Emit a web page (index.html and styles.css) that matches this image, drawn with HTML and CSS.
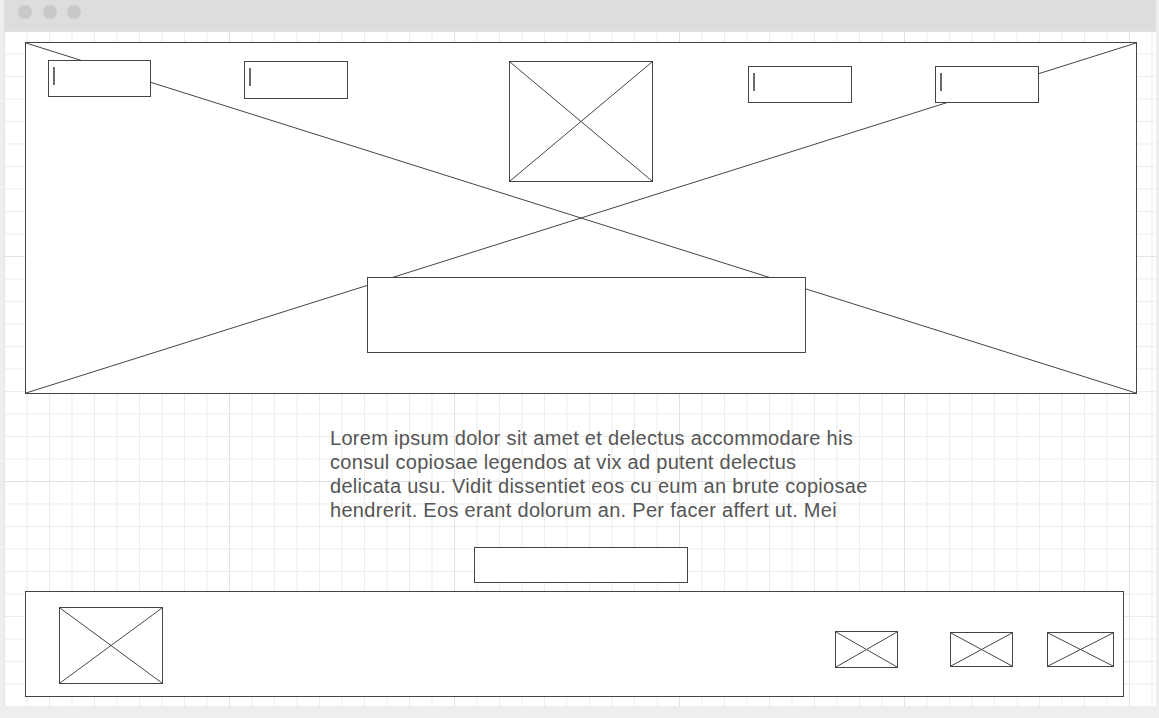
FILE: index.html
```html
<!DOCTYPE html>
<html lang="en">
<head>
<meta charset="utf-8">
<title>Wireframe</title>
<link rel="stylesheet" href="styles.css">
</head>
<body>
<div class="window">
  <div class="titlebar">
    <span class="dot"></span><span class="dot"></span><span class="dot"></span>
  </div>
  <div class="canvas">
    <section class="hero">
      <svg class="cross" viewBox="0 0 100 100" preserveAspectRatio="none"><line x1="0" y1="0" x2="100" y2="100"/><line x1="100" y1="0" x2="0" y2="100"/></svg>
      <div class="hero-row">
        <div class="input in-1"><span class="caret"></span></div>
        <div class="input in-2"><span class="caret"></span></div>
        <div class="ph hero-img"><svg viewBox="0 0 100 100" preserveAspectRatio="none"><line x1="0" y1="0" x2="100" y2="100"/><line x1="100" y1="0" x2="0" y2="100"/></svg></div>
        <div class="input in-3"><span class="caret"></span></div>
        <div class="input in-4"><span class="caret"></span></div>
      </div>
      <div class="hero-box"></div>
    </section>
    <p class="copy">Lorem ipsum dolor sit amet et delectus accommodare his<br>consul copiosae legendos at vix ad putent delectus<br>delicata usu. Vidit dissentiet eos cu eum an brute copiosae<br>hendrerit. Eos erant dolorum an. Per facer affert ut. Mei</p>
    <div class="button"></div>
    <footer class="footer">
      <div class="ph foot-img"><svg viewBox="0 0 100 100" preserveAspectRatio="none"><line x1="0" y1="0" x2="100" y2="100"/><line x1="100" y1="0" x2="0" y2="100"/></svg></div>
      <div class="ph small s-1"><svg viewBox="0 0 100 100" preserveAspectRatio="none"><line x1="0" y1="0" x2="100" y2="100"/><line x1="100" y1="0" x2="0" y2="100"/></svg></div>
      <div class="ph small s-2"><svg viewBox="0 0 100 100" preserveAspectRatio="none"><line x1="0" y1="0" x2="100" y2="100"/><line x1="100" y1="0" x2="0" y2="100"/></svg></div>
      <div class="ph small s-3"><svg viewBox="0 0 100 100" preserveAspectRatio="none"><line x1="0" y1="0" x2="100" y2="100"/><line x1="100" y1="0" x2="0" y2="100"/></svg></div>
    </footer>
  </div>
</div>
</body>
</html>
```
FILE: styles.css
```css
* { box-sizing: border-box; }
html, body { margin: 0; padding: 0; }
body {
  background: #eeeeee;
  font-family: "Liberation Sans", Arial, sans-serif;
  width: 1159px;
  height: 718px;
  overflow: hidden;
}
.window {
  margin-left: 4px;
  width: 1152px;
  display: flex;
  flex-direction: column;
}
.titlebar {
  height: 31px;
  background: #dddddd;
  display: flex;
  align-items: flex-start;
  padding: 5px 0 0 14px;
  gap: 10.5px;
}
.dot {
  width: 14px;
  height: 14px;
  border-radius: 50%;
  background: #c9c9c9;
}
.canvas {
  height: 675px;
  background-color: #ffffff;
  background-image:
    linear-gradient(to right, #e2e2e2 1px, transparent 1px),
    linear-gradient(to bottom, #e2e2e2 1px, transparent 1px),
    linear-gradient(to right, #ececec 1px, transparent 1px),
    linear-gradient(to bottom, #ececec 1px, transparent 1px);
  background-size: 225px 225px, 225px 225px, 22.5px 22.5px, 22.5px 22.5px;
  background-position: 0 0;
  padding: 11px 0 0 21px;
  display: flex;
  flex-direction: column;
  align-items: flex-start;
}
svg line {
  stroke: #444444;
  stroke-width: 1;
  vector-effect: non-scaling-stroke;
}
.hero {
  position: relative;
  width: 1112px;
  height: 352px;
  border: 1px solid #444444;
  background: #ffffff;
  padding-top: 17px;
}
.cross {
  position: absolute;
  left: 0;
  top: 0;
  width: 100%;
  height: 100%;
  display: block;
}
.hero-row {
  position: relative;
  display: flex;
  align-items: flex-start;
  padding-left: 22px;
}
.input {
  width: 104px;
  height: 37px;
  border: 1px solid #444444;
  background: #ffffff;
  padding: 6px 0 0 4px;
  flex: none;
}
.caret {
  display: block;
  width: 2px;
  height: 18px;
  background: #6a6a6a;
}
.in-1 { width: 103px; }
.in-2 { margin-left: 93px; margin-top: 1px; height: 38px; }
.hero-img { margin-left: 161px; margin-top: 1px; width: 144px; height: 121px; }
.in-3 { margin-left: 95px; margin-top: 6px; }
.in-4 { margin-left: 83px; margin-top: 6px; }
.ph {
  border: 1px solid #444444;
  background: #ffffff;
  flex: none;
}
.ph svg {
  display: block;
  width: 100%;
  height: 100%;
}
.hero-box {
  position: relative;
  margin: 95px 0 0 341px;
  width: 439px;
  height: 76px;
  border: 1px solid #444444;
  background: #ffffff;
}
.copy {
  margin: 32px 0 0 305px;
  font-size: 20px;
  letter-spacing: 0.3px;
  line-height: 24px;
  color: #555555;
  white-space: nowrap;
}
.button {
  margin: 25px 0 0 449px;
  width: 214px;
  height: 36px;
  border: 1px solid #444444;
  background: #ffffff;
}
.footer {
  margin-top: 8px;
  width: 1099px;
  height: 106px;
  border: 1px solid #444444;
  background: #ffffff;
  display: flex;
  align-items: flex-start;
  padding-right: 9px;
}
.foot-img { margin: 15px 0 0 33px; width: 104px; height: 77px; }
.small { height: 35px; }
.s-1 { margin: 39px 0 0 auto; width: 63px; height: 37px; }
.s-2 { margin: 40px 0 0 52px; width: 63px; }
.s-3 { margin: 40px 0 0 34px; width: 67px; }
```
